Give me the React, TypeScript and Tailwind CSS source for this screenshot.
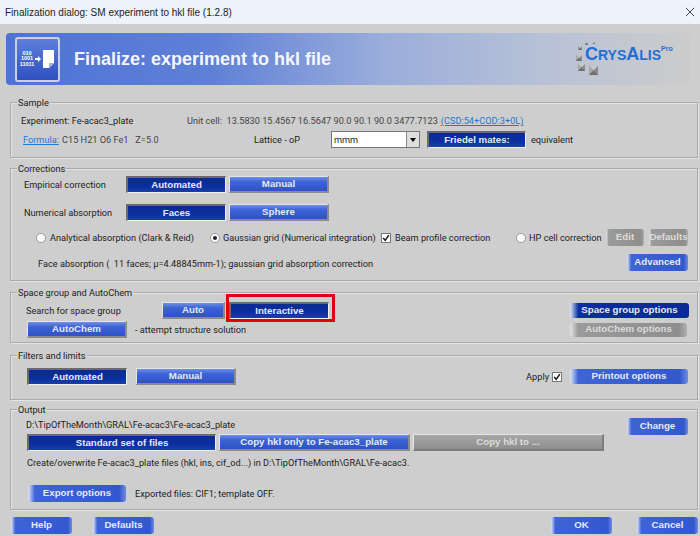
import React from 'react';

const font = "font-['Liberation_Sans',sans-serif]";
const bodyFont = "font-['Roboto','Liberation_Sans',sans-serif]";

type BtnKind = 'raised' | 'pressed' | 'pill' | 'pillDark' | 'pillGray' | 'gray';

const btnStyles: Record<BtnKind, string> = {
  raised:
    'bg-[linear-gradient(180deg,#6f8fe6_0%,#3d63d4_35%,#2f52c4_100%)] border-t border-l border-t-[#e6e6e6] border-l-[#e6e6e6] border-r-2 border-b-2 border-r-[#8a8a8a] border-b-[#8a8a8a]',
  pressed:
    'bg-[linear-gradient(180deg,#0b2a94_0%,#0a2f9f_60%,#1a3fa8_100%)] border-t-2 border-l-2 border-t-[#6b6b6b] border-l-[#6b6b6b] border-r border-b border-r-[#f0f0f0] border-b-[#f0f0f0]',
  pill:
    'rounded-[3px] bg-[linear-gradient(90deg,#dfe6f7_0%,#3f64d6_7%,#3358cc_93%,#6f8ce0_100%)]',
  pillDark:
    'rounded-[3px] bg-[linear-gradient(90deg,#dfe6f7_0%,#0b2f9e_7%,#0a2a94_100%)]',
  pillGray:
    'rounded-[3px] bg-[linear-gradient(90deg,#e4e4e4_0%,#9a9a9a_7%,#8e8e8e_93%,#b0b0b0_100%)]',
  gray:
    'bg-[linear-gradient(180deg,#a6a6a6_0%,#8e8e8e_100%)] border-t border-l border-t-[#e6e6e6] border-l-[#e6e6e6] border-r-2 border-b-2 border-r-[#7d7d7d] border-b-[#7d7d7d]',
};

function Btn({ label, kind, w, h = 17 }: { label: string; kind: BtnKind; w: number; h?: number }) {
  const isGray = kind === 'pillGray' || kind === 'gray';
  return (
    <button
      style={{ width: w, height: h }}
      className={`shrink-0 flex items-center justify-center whitespace-nowrap ${font} font-bold text-[9.7px] ${isGray ? 'text-[#dcdcdc]' : 'text-[#e4e9fb]'} ${btnStyles[kind]}`}
    >
      {label}
    </button>
  );
}

function Group({ title, className, children }: { title: string; className: string; children: React.ReactNode }) {
  return (
    <div className={`relative ml-[10px] mr-[2px] border border-[#a9a9a9] shadow-[inset_1px_1px_0_#e4e4e4,1px_1px_0_#e4e4e4] ${className}`}>
      <span className="absolute left-[6px] top-[-7px] bg-[#cecece] px-[1px] leading-[13px]">{title}</span>
      {children}
    </div>
  );
}

function Radio({ on }: { on?: boolean }) {
  return (
    <span className="shrink-0 w-[10px] h-[10px] rounded-full bg-white border border-[#9a9a9a] flex items-center justify-center">
      {on && <span className="w-[4px] h-[4px] rounded-full bg-[#222]" />}
    </span>
  );
}

function Check() {
  return (
    <span className="shrink-0 w-[10px] h-[10px] bg-white border border-[#777] flex items-center justify-center">
      <svg viewBox="0 0 10 10" className="w-[8px] h-[8px]">
        <path d="M1.5 5 L4 8 L8.5 1.5" fill="none" stroke="#111" strokeWidth="1.8" />
      </svg>
    </span>
  );
}

function Pyramid({ x, y, s }: { x: number; y: number; s: number }) {
  const cx = x + s / 2;
  const cy = y + s / 2;
  return (
    <g>
      <rect x={x} y={y} width={s} height={s} fill="#8b8b8b" />
      <polygon points={`${x},${y} ${x + s},${y} ${cx},${cy}`} fill="#c9c9c9" />
      <polygon points={`${x},${y} ${x},${y + s} ${cx},${cy}`} fill="#a8a8a8" />
      <polygon points={`${x + s},${y + s} ${x},${y + s} ${cx},${cy}`} fill="#6e6e6e" />
    </g>
  );
}

function Logo() {
  return (
    <div className="relative ml-auto mr-[15px] w-[100px] h-[34px]">
      <svg viewBox="0 0 100 34" className="absolute inset-0 w-[100px] h-[34px]">
        <Pyramid x={3} y={4} s={4} />
        <Pyramid x={1} y={13} s={6} />
        <Pyramid x={3} y={22} s={7} />
        <Pyramid x={14} y={24} s={9} />
        <Pyramid x={10} y={0} s={3} />
        <Pyramid x={18} y={0} s={2} />
      </svg>
      <div className={`absolute left-[10px] top-[2px] flex items-start font-bold text-[#1f6fd6] ${font}`}>
        <span className="text-[18px] leading-[20px] whitespace-nowrap">
          C<span className="text-[14px]">RYS</span>A<span className="text-[14px]">LIS</span>
        </span>
        <span className="text-[7px] leading-[8px] mt-[1px]">Pro</span>
      </div>
    </div>
  );
}

function Banner() {
  return (
    <div className="ml-[6px] mr-[10px] mt-[9px] h-[52px] rounded-l-[4px] bg-[linear-gradient(90deg,#4d73d8_0%,#5f80d6_30%,#9aaddb_55%,#b9c2d6_80%,#cccccc_100%)] flex items-center">
      <div className="ml-[9px] w-[45px] h-[45px] rounded-[3px] border-2 border-[#c9d0de] bg-[linear-gradient(180deg,#5f7fdc_0%,#2f50c0_100%)] flex items-center justify-center gap-[1px]">
        <span className={`font-bold text-[5.5px] leading-[5.5px] text-white text-center ${font}`}>
          010<br />1001<br />11011
        </span>
        <svg viewBox="0 0 20 20" className="w-[20px] h-[20px]">
          <path d="M0 9h3V7l3 3-3 3v-2H0z" fill="#fff" />
          <path d="M8 1h11v13l-5 5H8z" fill="#fff" />
          <path d="M14 19v-5h5z" fill="#9fb2e8" />
        </svg>
      </div>
      <h1 className={`ml-[14px] font-bold text-[18px] text-[#f4f6fd] ${font}`}>
        Finalize: experiment to hkl file
      </h1>
      <Logo />
    </div>
  );
}

export default function App() {
  return (
    <div className={`w-[700px] h-[536px] overflow-hidden bg-[#cecece] text-[9.2px] text-[#222] whitespace-nowrap ${bodyFont}`}>
      <div className={`h-[24px] bg-[#eef3fb] flex items-center justify-between pl-[5px] pr-[5px] text-[10px] text-[#222] ${font}`}>
        <span>Finalization dialog: SM experiment to hkl file (1.2.8)</span>
        <svg viewBox="0 0 12 12" className="w-[10px] h-[10px]">
          <path d="M1 1l10 10M11 1L1 11" stroke="#222" strokeWidth="1" />
        </svg>
      </div>
      <Banner />

      <Group title="Sample" className="mt-[17px] h-[56px]">
        <div className="flex items-center h-[14px] mt-[11px] pl-[10px]">
          <span className="w-[166px]">Experiment: Fe-acac3_plate</span>
          <span className="text-[#444]">Unit cell:&nbsp; 13.5830 15.4567 16.5647 90.0 90.1 90.0 3477.7123</span>
          <span className="ml-[3px] text-[#1f78d1] underline">(CSD:54+COD:3+0L)</span>
        </div>
        <div className="flex items-center h-[17px] mt-[3px] pl-[12px]">
          <span className="w-[39px] text-[#1f78d1] underline">Formula:</span>
          <span className="w-[192px] text-[#444]">C15 H21 O6 Fe1&nbsp;&nbsp; Z=5.0</span>
          <span className="w-[77px]">Lattice - oP</span>
          <div className="w-[89px] h-[17px] bg-white border border-[#777] flex items-center justify-between pl-[2px]">
            <span>mmm</span>
            <span className="w-[13px] h-full bg-[#ddd] border-l border-[#888] flex items-center justify-center">
              <span className="w-0 h-0 border-x-[3px] border-x-transparent border-t-[4px] border-t-black" />
            </span>
          </div>
          <div className="ml-[7px]">
            <Btn label="Friedel mates:" kind="pressed" w={99} />
          </div>
          <span className="ml-[5px]">equivalent</span>
        </div>
      </Group>

      <Group title="Corrections" className="mt-[10px] h-[113px]">
        <div className="flex items-center h-[17px] mt-[7px] pl-[13px]">
          <span className="w-[102px]">Empirical correction</span>
          <Btn label="Automated" kind="pressed" w={100} />
          <div className="ml-[3px]"><Btn label="Manual" kind="raised" w={100} /></div>
        </div>
        <div className="flex items-center h-[17px] mt-[11px] pl-[13px]">
          <span className="w-[102px]">Numerical absorption</span>
          <Btn label="Faces" kind="pressed" w={100} />
          <div className="ml-[3px]"><Btn label="Sphere" kind="raised" w={100} /></div>
        </div>
        <div className="flex items-center h-[17px] mt-[8px] pl-[25px]">
          <Radio />
          <span className="ml-[4px] w-[160px] pt-[1px]">Analytical absorption (Clark &amp; Reid)</span>
          <Radio on />
          <span className="ml-[3px] w-[158px] pt-[1px]">Gaussian grid (Numerical integration)</span>
          <Check />
          <span className="ml-[4px] w-[121px] pt-[1px]">Beam profile correction</span>
          <Radio />
          <span className="ml-[3px] w-[77px] pt-[1px]">HP cell correction</span>
          <Btn label="Edit" kind="pillGray" w={38} />
          <div className="ml-[5px]"><Btn label="Defaults" kind="pillGray" w={39} /></div>
        </div>
        <div className="flex items-center h-[17px] mt-[8px] pl-[27px]">
          <span className="pt-[2px]">Face absorption (&nbsp; 11 faces; μ=4.48845mm-1); gaussian grid absorption correction</span>
          <div className="ml-auto mr-[9px]"><Btn label="Advanced" kind="pill" w={61} /></div>
        </div>
      </Group>

      <Group title="Space group and AutoChem" className="mt-[11px] h-[51px]">
        <div className="flex items-center h-[17px] mt-[9px] pl-[15px]">
          <span className="w-[136px]">Search for space group</span>
          <Btn label="Auto" kind="raised" w={63} />
          <div className="relative ml-[4px]">
            <Btn label="Interactive" kind="pressed" w={100} />
            <span className="absolute left-[-3px] top-[-8px] w-[109px] h-[28px] border-[3px] border-[#e0000f]" />
          </div>
          <div className="ml-auto mr-[8px]"><Btn label="Space group options" kind="pillDark" w={119} h={15} /></div>
        </div>
        <div className="flex items-center h-[17px] mt-[2px] pl-[16px]">
          <Btn label="AutoChem" kind="raised" w={100} />
          <span className="ml-[8px]">- attempt structure solution</span>
          <div className="ml-auto mr-[10px]"><Btn label="AutoChem options" kind="pillGray" w={117} h={14} /></div>
        </div>
      </Group>

      <Group title="Filters and limits" className="mt-[12px] h-[45px]">
        <div className="flex items-center h-[17px] mt-[12px] pl-[16px]">
          <Btn label="Automated" kind="pressed" w={100} />
          <div className="ml-[9px]"><Btn label="Manual" kind="raised" w={100} /></div>
          <span className="ml-auto mr-[3px]">Apply</span>
          <Check />
          <div className="ml-[8px] mr-[9px]"><Btn label="Printout options" kind="pill" w={118} h={15} /></div>
        </div>
      </Group>

      <Group title="Output" className="mt-[9px] h-[101px]">
        <div className="flex items-center h-[17px] mt-[6px] pl-[15px]">
          <span>D:\TipOfTheMonth\GRAL\Fe-acac3\Fe-acac3_plate</span>
          <div className="ml-auto mr-[9px] mt-[4px]"><Btn label="Change" kind="pill" w={61} /></div>
        </div>
        <div className="flex items-center h-[17px] mt-[1px] pl-[16px] gap-[3px]">
          <Btn label="Standard set of files" kind="pressed" w={189} />
          <Btn label="Copy hkl only to Fe-acac3_plate" kind="raised" w={191} />
          <Btn label="Copy hkl to ..." kind="gray" w={191} />
        </div>
        <div className="h-[14px] mt-[5px] pl-[16px] flex items-center">
          Create/overwrite Fe-acac3_plate files (hkl, ins, cif_od...) in D:\TipOfTheMonth\GRAL\Fe-acac3.
        </div>
        <div className="flex items-center h-[17px] mt-[15px] pl-[17px]">
          <Btn label="Export options" kind="pill" w={98} />
          <span className="ml-[9px]">Exported files: CIF1; template OFF.</span>
        </div>
      </Group>

      <div className="flex items-center h-[17px] mt-[7px] pl-[11px] pr-[2px]">
        <Btn label="Help" kind="pill" w={61} />
        <div className="ml-[21px]"><Btn label="Defaults" kind="pill" w={61} /></div>
        <div className="ml-auto"><Btn label="OK" kind="pill" w={61} /></div>
        <div className="ml-[25px]"><Btn label="Cancel" kind="pill" w={61} /></div>
      </div>
    </div>
  );
}
